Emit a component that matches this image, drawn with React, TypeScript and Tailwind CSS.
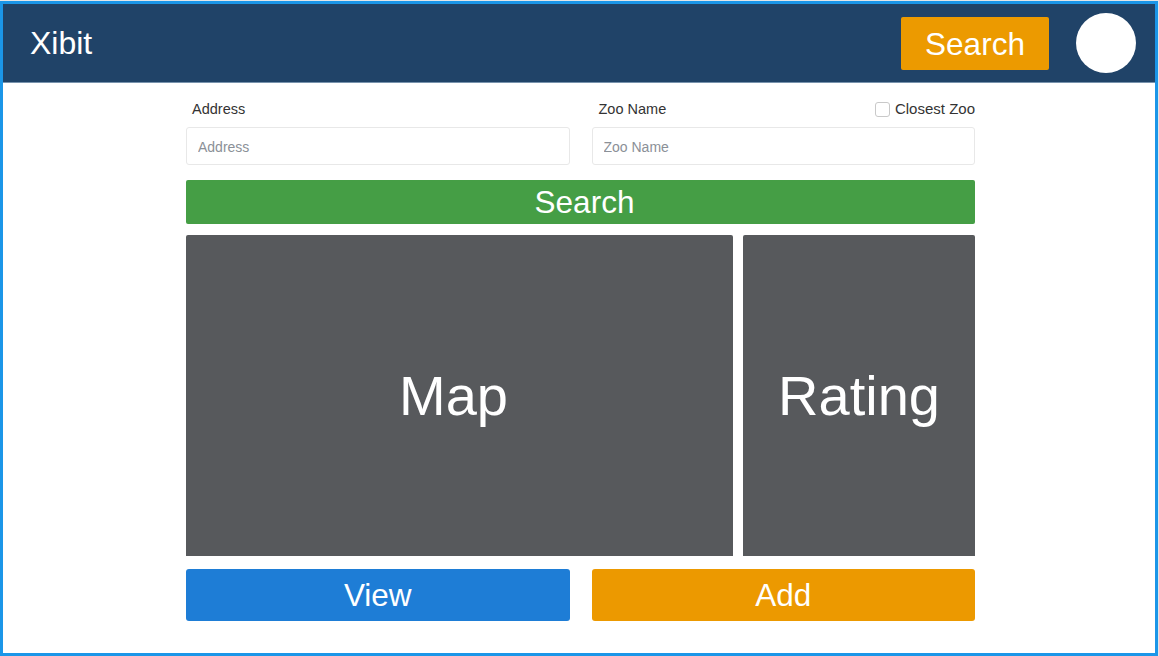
export default function App() {
  return (
    <div className="h-[656px] w-[1159px] bg-[#e4e6e8] pt-px pr-px" style={{ fontFamily: '"Liberation Sans", Arial, sans-serif' }}>
      <div className="flex h-[655px] flex-col border-[3px] border-[#1b96e8] bg-white">
        {/* Header */}
        <header className="flex h-[79px] shrink-0 items-center border-b border-[#7893ad] bg-[#204368] pl-[27px] pr-[19px]">
          <span className="text-[32px] leading-none text-white">Xibit</span>
          <div className="ml-auto flex items-center gap-[27px]">
            <button className="flex h-[53px] w-[148px] items-center justify-center rounded-[2px] bg-[#ec9a00] pt-[3px] text-[31.5px] leading-none text-white">
              Search
            </button>
            <div className="h-[60px] w-[60px] rounded-full bg-white" />
          </div>
        </header>

        {/* Form */}
        <div className="ml-[183px] w-[789px] pt-[17px]">
          <div className="grid grid-cols-2 gap-[22px]">
            <div>
              <div className="flex h-[18px] items-center pl-[6px] pt-px text-[14.5px] text-[#333]">Address</div>
              <input
                placeholder="Address"
                className="mt-[9px] h-[38px] w-full rounded-[3px] border border-[#e8e8e8] px-[11px] pt-px text-[14px] placeholder-[#8b9097] outline-none"
              />
            </div>
            <div>
              <div className="flex h-[18px] items-center pl-[7px] pt-px text-[14.5px] text-[#333]">
                <span>Zoo Name</span>
                <label className="ml-auto flex items-center gap-[5px]">
                  <span className="h-[15px] w-[15px] rounded-[3px] border border-[#c9c9c9] bg-white" />
                  <span className="text-[15px]">Closest Zoo</span>
                </label>
              </div>
              <input
                placeholder="Zoo Name"
                className="mt-[9px] h-[38px] w-full rounded-[3px] border border-[#e8e8e8] px-[11px] pt-px text-[14px] placeholder-[#8b9097] outline-none"
              />
            </div>
          </div>

          <button className="mt-[15px] flex h-[44px] w-full items-center justify-center rounded-[2px] bg-[#459e45] pl-[8px] pt-[2px] text-[31.5px] leading-none text-white">
            Search
          </button>

          <div className="mt-[11px] flex h-[321px] gap-[10px]">
            <div className="flex w-[547px] items-center justify-center rounded-t-[2px] bg-[#57595c] pr-[12px] text-[56px] text-white">
              Map
            </div>
            <div className="flex flex-1 items-center justify-center rounded-t-[2px] bg-[#57595c] text-[56px] text-white">
              Rating
            </div>
          </div>

          <div className="mt-[13px] grid grid-cols-2 gap-[22px]">
            <button className="flex h-[52px] items-center justify-center rounded-[3px] bg-[#1e7dd6] pt-[2px] text-[31.5px] leading-none text-white">
              View
            </button>
            <button className="flex h-[52px] items-center justify-center rounded-[3px] bg-[#ec9900] pt-[2px] text-[31.5px] leading-none text-white">
              Add
            </button>
          </div>
        </div>
      </div>
    </div>
  )
}
